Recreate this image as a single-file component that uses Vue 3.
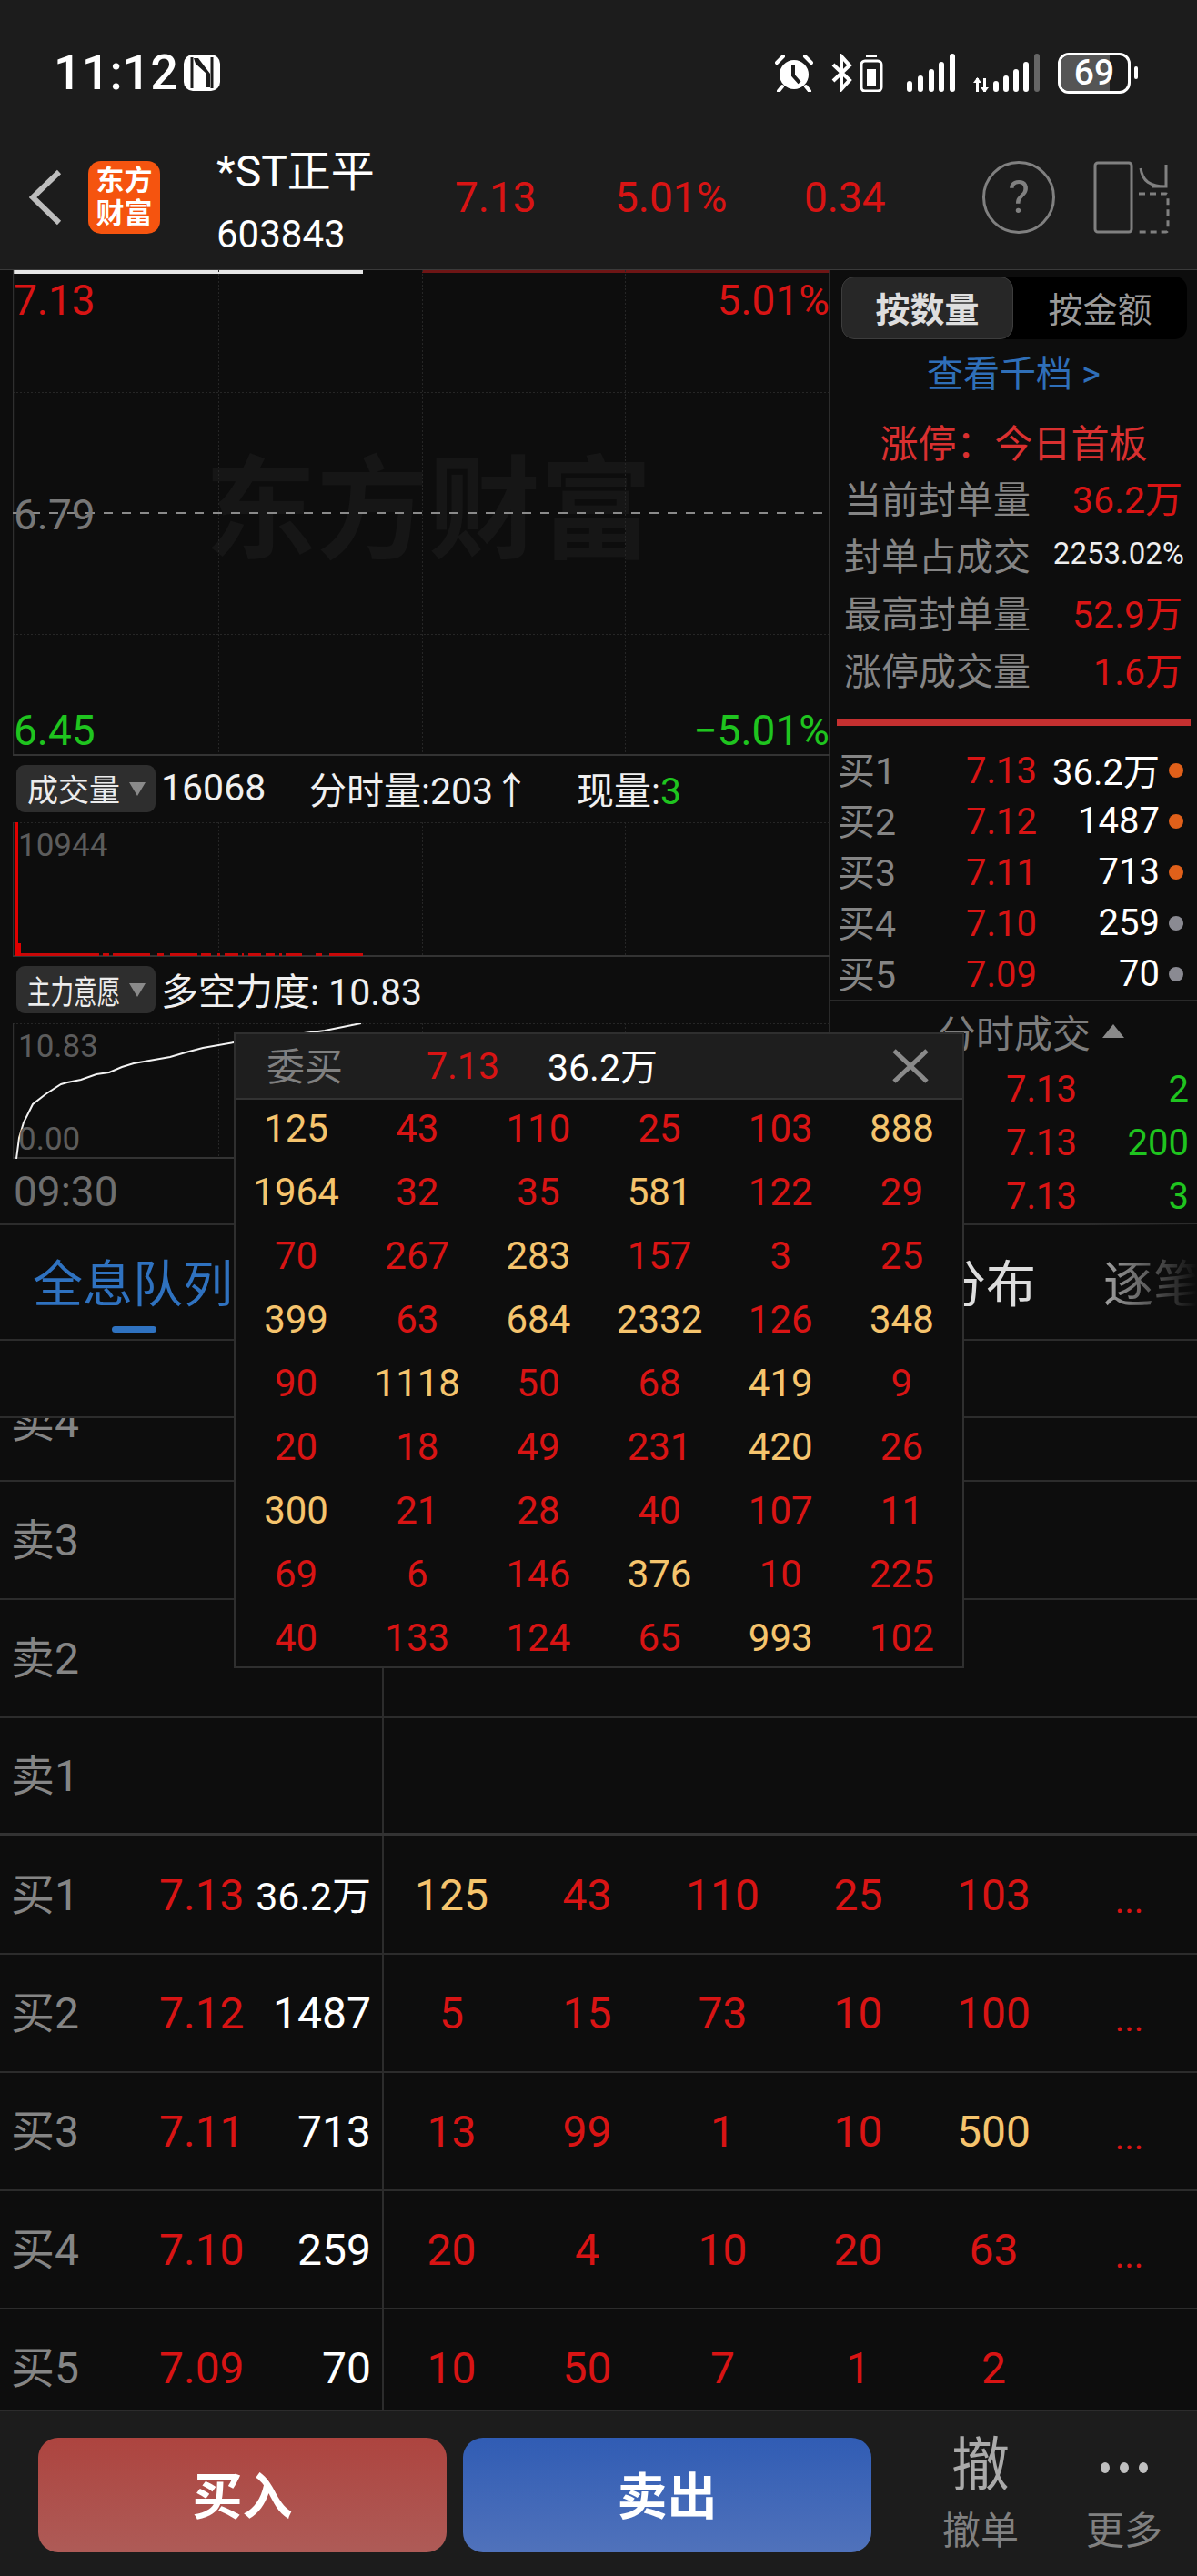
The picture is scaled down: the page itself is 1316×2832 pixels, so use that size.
<script setup>
const limitRows = [
  { label: '当前封单量', value: '36.2万', cls: 'red' },
  { label: '封单占成交', value: '2253.02%', cls: 'small' },
  { label: '最高封单量', value: '52.9万', cls: 'red' },
  { label: '涨停成交量', value: '1.6万', cls: 'red' },
];

const bidRows = [
  { label: '买1', price: '7.13', vol: '36.2万', dot: 'orange' },
  { label: '买2', price: '7.12', vol: '1487', dot: 'orange' },
  { label: '买3', price: '7.11', vol: '713', dot: 'orange' },
  { label: '买4', price: '7.10', vol: '259', dot: 'grey' },
  { label: '买5', price: '7.09', vol: '70', dot: 'grey' },
];

const ticks = [
  { price: '7.13', vol: 2 },
  { price: '7.13', vol: 200 },
  { price: '7.13', vol: 3 },
];

// tiny volume bars along the bottom of the sub chart [from, to]
const volBars = [
  [23, 109], [113, 120], [124, 165], [173, 180], [187, 217], [221, 232], [239, 242], [247, 262],
  [266, 268], [273, 287], [292, 302], [307, 310], [314, 332], [347, 354], [362, 399],
];

const queuePopup = [
  125, 43, 110, 25, 103, 888,
  1964, 32, 35, 581, 122, 29,
  70, 267, 283, 157, 3, 25,
  399, 63, 684, 2332, 126, 348,
  90, 1118, 50, 68, 419, 9,
  20, 18, 49, 231, 420, 26,
  300, 21, 28, 40, 107, 11,
  69, 6, 146, 376, 10, 225,
  40, 133, 124, 65, 993, 102,
];

const bookRows = [
  { label: '卖4' },
  { label: '卖3' },
  { label: '卖2' },
  { label: '卖1', thick: true },
  { label: '买1', price: '7.13', vol: '36.2万', queue: [125, 43, 110, 25, 103], more: true },
  { label: '买2', price: '7.12', vol: '1487', queue: [5, 15, 73, 10, 100], more: true },
  { label: '买3', price: '7.11', vol: '713', queue: [13, 99, 1, 10, 500], more: true },
  { label: '买4', price: '7.10', vol: '259', queue: [20, 4, 10, 20, 63], more: true },
  { label: '买5', price: '7.09', vol: '70', queue: [10, 50, 7, 1, 2], more: false },
];

function isBig(n) {
  return n >= 280 || n === 125;
}
</script>

<template>
  <div class="page">
    <header class="top">
      <div class="status">
        <span class="time">11:12</span>
        <svg class="nfc" width="40" height="40" viewBox="0 0 40 40">
          <rect width="40" height="40" rx="10" fill="#fff" />
          <path d="M9 3v34M31 3v34" stroke="#1c1c1c" stroke-width="3" fill="none" />
          <path d="M11 4h5l13 17v15h-4L25 21 13 10z" fill="#1c1c1c" />
          <path d="M13 19l12 13v-7L13 12z" fill="#fff" />
        </svg>
        <div class="status-right">
          <svg width="42" height="42" viewBox="0 0 42 42">
            <circle cx="21" cy="23" r="16" fill="#fff" />
            <path d="M20 12v12l7 8" stroke="#1c1c1c" stroke-width="4" fill="none" />
            <path d="M2 10L9 3M40 10L33 3M8 36l-4 5M34 36l4 5" stroke="#fff" stroke-width="4" stroke-linecap="round" />
          </svg>
          <svg class="ic-bt" width="58" height="42" viewBox="0 0 58 42">
            <path d="M3 12l18 17-9 10V3l9 10L3 30" stroke="#fff" stroke-width="4" fill="none" />
            <rect x="34" y="8" width="22" height="33" rx="4" stroke="#fff" stroke-width="3" fill="none" />
            <rect x="39" y="1" width="12" height="3" fill="#fff" />
            <rect x="40" y="17" width="10" height="18" fill="#fff" />
          </svg>
          <svg class="ic-sig1" width="53" height="42" viewBox="0 0 53 42">
            <g fill="#fff">
              <rect x="0" y="30" width="6" height="12" rx="3" />
              <rect x="12" y="24" width="6" height="18" rx="3" />
              <rect x="24" y="17" width="6" height="25" rx="3" />
              <rect x="35" y="9" width="6" height="33" rx="3" />
              <rect x="47" y="0" width="6" height="42" rx="3" />
            </g>
          </svg>
          <svg class="ic-sig2" width="73" height="42" viewBox="0 0 73 42">
            <g fill="#fff">
              <rect x="3" y="27" width="3" height="15" />
              <path d="M0 32l4.500-6 4.500 6z" />
              <rect x="11" y="27" width="3" height="15" />
              <path d="M8 37l4.500 6 4.500-6z" />
              <rect x="22" y="30" width="6" height="12" rx="3" />
              <rect x="33" y="24" width="6" height="18" rx="3" />
              <rect x="44" y="17" width="6" height="25" rx="3" />
              <rect x="55" y="9" width="6" height="33" rx="3" />
            </g>
            <rect x="67" y="0" width="6" height="42" rx="3" fill="#666" />
          </svg>
          <div class="battery"><span class="battery-fill"></span><b>69</b></div>
          <span class="battery-tip"></span>
        </div>
      </div>
      <nav class="nav">
        <svg class="back" width="36" height="62" viewBox="0 0 36 62">
          <path d="M33 3L4 31l29 28" stroke="#bdbdbd" stroke-width="6" fill="none" />
        </svg>
        <div class="logo">东方<br />财富</div>
        <div class="stock">
          <div class="stock-name">*ST正平</div>
          <div class="stock-code">603843</div>
        </div>
        <span class="nav-val w1">7.13</span>
        <span class="nav-val w2">5.01%</span>
        <span class="nav-val w3">0.34</span>
        <div class="help">?</div>
        <svg class="split" width="84" height="80" viewBox="0 0 84 80" fill="none" stroke="#808080" stroke-width="3">
          <rect x="2" y="2" width="40" height="76" rx="3" />
          <path d="M50 36h30a2 2 0 0 1 2 2v38a2 2 0 0 1-2 2H50" stroke-dasharray="7 5" />
          <path d="M52 8c2 14 10 20 28 20M80 4v24H64" />
        </svg>
      </nav>
    </header>

    <section class="main">
      <div class="left">
        <div class="chart chart-price">
          <div class="watermark">东方财富</div>
          <svg class="chart-svg" width="899" height="534" viewBox="0 0 899 534">
            <rect x="1" y="0" width="384" height="4" fill="#e6e6e6" />
            <rect x="450" y="0" width="448" height="3" fill="#6e1515" />
            <g stroke="#262626" stroke-width="1" stroke-dasharray="2 2">
              <path d="M0 134.500h898M0 400.500h898M226.500 0v533M450.500 0v533M673.500 0v533" />
            </g>
            <path d="M0.500 0v533M898 0v533" stroke="#2f2f2f" stroke-width="1.500" />
            <path d="M0 533h898" stroke="#333" stroke-width="2" />
            <path d="M0 267h898" stroke="#8a8a8a" stroke-width="2" stroke-dasharray="10 10" />
          </svg>
          <span class="lbl red l-top">7.13</span>
          <span class="lbl red r-top">5.01%</span>
          <span class="lbl grey l-mid">6.79</span>
          <span class="lbl green l-bot">6.45</span>
          <span class="lbl green r-bot">−5.01%</span>
        </div>

        <div class="sub-head">
          <div class="pill"><span class="pill-text">成交量</span><i class="pill-arrow"></i></div>
          <span class="sh-a">16068</span>
          <span class="sh-b">分时量:203↑</span>
          <span>现量:<span class="green">3</span></span>
        </div>
        <div class="chart chart-sub">
          <svg class="chart-svg" width="899" height="148" viewBox="0 0 899 148">
            <path d="M0 0.500h898M226.500 0v147M450.500 0v147M673.500 0v147" stroke="#262626" stroke-dasharray="2 2" />
            <path d="M0.500 0v148" stroke="#2f2f2f" stroke-width="1.500" />
            <path d="M0 147h898" stroke="#333" stroke-width="2" />
            <rect x="2" y="0" width="4" height="147" fill="#e00000" />
            <rect x="6" y="133" width="3" height="14" fill="#e00000" />
            <rect v-for="(b, i) in volBars" :key="i" :x="b[0] - 14" y="144" :width="b[1] - b[0]" height="3" fill="#c80808" />
          </svg>
          <span class="lbl-sub s-top">10944</span>
        </div>

        <div class="sub-head">
          <div class="pill"><span class="pill-text narrow">主力意愿</span><i class="pill-arrow"></i></div>
          <span class="sh-c">多空力度: 10.83</span>
        </div>
        <div class="chart chart-sub">
          <svg class="chart-svg" width="899" height="149" viewBox="0 0 899 149">
            <path d="M0 0.500h898M226.500 0v148M450.500 0v148M673.500 0v148" stroke="#262626" stroke-dasharray="2 2" />
            <path d="M0.500 0v149" stroke="#2f2f2f" stroke-width="1.500" />
            <path d="M0 148h898" stroke="#333" stroke-width="2" />
            <polyline
              points="4,149 7,126 12,109 22,89 36,78 53,67 60,65 75,62 92,56 106,54 120,48 133,44 150,41 173,37 190,32 209,27 243,21 343,8 383,0"
              fill="none" stroke="#f2f2f2" stroke-width="2" />
          </svg>
          <span class="lbl-sub s-top">10.83</span>
          <span class="lbl-sub s-bot">0.00</span>
        </div>
        <div class="time-row">09:30</div>
      </div>

      <aside class="right">
        <div class="toggle">
          <span class="toggle-on">按数量</span>
          <span class="toggle-off">按金额</span>
        </div>
        <div class="link">查看千档 &gt;</div>
        <div class="limit-title">涨停：今日首板</div>
        <div v-for="r in limitRows" :key="r.label" class="limit-row">
          <span class="limit-label">{{ r.label }}</span>
          <span :class="r.cls === 'red' ? 'limit-red' : 'limit-small'">{{ r.value }}</span>
        </div>
        <div class="red-bar"></div>
        <div class="bids">
          <div v-for="r in bidRows" :key="r.label" class="bid-row">
            <span class="grey bid-label">{{ r.label }}</span>
            <span class="red">{{ r.price }}</span>
            <span class="bid-vol">{{ r.vol }}</span>
            <i class="dot" :class="r.dot"></i>
          </div>
        </div>
        <div class="tick-head">分时成交<i class="tick-arrow"></i></div>
        <div v-for="(t, i) in ticks" :key="i" class="tick-row">
          <span class="red">{{ t.price }}</span>
          <span class="green">{{ t.vol }}</span>
        </div>
      </aside>
    </section>

    <div class="tabs">
      <div class="tab-active">全息队列<i class="tab-bar"></i></div>
      <span class="tab-b">分布</span>
      <span class="tab-c">逐笔</span>
      <i class="tab-fade"></i>
    </div>
    <div class="book-head"></div>
    <div class="book">
      <div v-for="(r, i) in bookRows" :key="r.label" class="book-row" :class="{ thick: r.thick, first: i === 0 }">
        <div class="book-left">
          <span class="book-label">{{ r.label }}</span>
          <span v-if="r.price" class="book-price red">{{ r.price }}</span>
          <span v-if="r.vol" class="book-vol" :class="{ tight: r.vol.endsWith('万') }">{{ r.vol }}</span>
        </div>
        <div class="book-right">
          <span v-for="(q, j) in r.queue" :key="j" :class="isBig(q) ? 'gold' : 'red'">{{ q }}</span>
          <span v-if="r.more" class="red more">...</span>
        </div>
      </div>
    </div>

    <footer class="bottom">
      <button class="btn buy"><span>买入</span></button>
      <button class="btn sell"><span>卖出</span></button>
      <div class="act act-cancel">
        <span class="act-icon">撤</span>
        <span class="act-text">撤单</span>
      </div>
      <div class="act act-more">
        <span class="dots"><i></i><i></i><i></i></span>
        <span class="act-text">更多</span>
      </div>
    </footer>

    <div class="popup">
      <div class="popup-head">
        <span class="p-title">委买</span>
        <span class="p-price red">7.13</span>
        <span class="p-vol">36.2万</span>
        <svg class="p-close" width="40" height="38" viewBox="0 0 40 38">
          <path d="M2 2l36 34M38 2L2 36" stroke="#8a8a8a" stroke-width="5" fill="none" />
        </svg>
      </div>
      <div class="popup-grid">
        <span v-for="(n, i) in queuePopup" :key="i" :class="isBig(n) ? 'gold' : 'red'">{{ n }}</span>
      </div>
    </div>
  </div>
</template>

<style scoped>
.page {
  position: relative;
  width: 1316px;
  height: 2832px;
  overflow: hidden;
  background: #0d0d0d;
  color: #fff;
  font-family: Roboto, "Noto Sans CJK SC", sans-serif;
  font-size: 40px;
  display: flex;
  flex-direction: column;
}
.red { color: #d81414; }
.green { color: #1fc41f; }
.grey { color: #858585; }
.gold { color: #f5c46d; }

.top {
  height: 296px;
  background: #1c1c1c;
  flex: none;
  box-shadow: 0 1px 0 #3a3a3a;
}
.status {
  height: 160px;
  display: flex;
  align-items: center;
  padding-left: 59px;
}
.time {
  font-size: 54px;
  font-weight: 500;
  line-height: 1;
  width: 143px;
  white-space: nowrap;
}
.status-right {
  margin-left: 610px;
  display: flex;
  align-items: center;
}
.ic-bt { margin-left: 19px; }
.ic-sig1 { margin-left: 26px; }
.ic-sig2 { margin-left: 20px; }
.battery {
  position: relative;
  margin-left: 20px;
  width: 80px;
  height: 45px;
  box-sizing: border-box;
  border: 3px solid #fff;
  border-radius: 12px;
  display: flex;
  align-items: center;
  justify-content: center;
  overflow: hidden;
}
.battery-fill {
  position: absolute;
  left: 0;
  top: 0;
  bottom: 0;
  width: 54px;
  background: #555;
}
.battery b {
  position: relative;
  font-size: 39px;
  font-weight: 500;
  line-height: 1;
}
.battery-tip {
  width: 4px;
  height: 14px;
  margin-left: 4px;
  border-radius: 2px;
  background: #fff;
}

.nav {
  height: 136px;
  display: flex;
  align-items: center;
  padding: 0 0 22px 32px;
  box-sizing: border-box;
}
.logo {
  margin-left: 29px;
  width: 79px;
  height: 80px;
  background: #f5540f;
  border-radius: 14px;
  color: #fff;
  font-size: 31px;
  font-weight: 700;
  line-height: 36px;
  text-align: center;
  box-sizing: border-box;
  padding-top: 4px;
}
.stock {
  margin-left: 62px;
  width: 262px;
  align-self: flex-start;
  padding-top: 4px;
}
.stock-name {
  font-size: 48px;
  line-height: 50px;
}
.stock-code {
  font-size: 42px;
  line-height: 50px;
  margin-top: 19px;
}
.nav-val {
  color: #d81414;
  font-size: 46px;
}
.w1 { width: 176px; }
.w2 { width: 208px; }
.w3 { width: 196px; }
.help {
  width: 80px;
  height: 80px;
  box-sizing: border-box;
  border: 3px solid #808080;
  border-radius: 50%;
  color: #808080;
  font-size: 50px;
  display: flex;
  align-items: center;
  justify-content: center;
}
.split { margin-left: 42px; }

.main {
  flex: none;
  height: 1050px;
  margin-top: 1px;
  display: flex;
}
.left {
  width: 913px;
  flex: none;
  border-right: 2px solid #2a2a2a;
  display: flex;
  flex-direction: column;
  border-bottom: 2px solid #2c2c2c;
  box-sizing: border-box;
}
.chart {
  position: relative;
  width: 899px;
  margin-left: 14px;
  flex: none;
}
.chart-svg {
  position: absolute;
  left: 0;
  top: 0;
}
.chart-price { height: 534px; }
.chart-sub { height: 148px; }
.watermark {
  position: absolute;
  left: 211px;
  top: 190px;
  font-size: 123px;
  line-height: 150px;
  font-weight: 700;
  color: #161616;
  white-space: nowrap;
}
.lbl {
  position: absolute;
  font-size: 46px;
  line-height: 50px;
}
.l-top { left: 1px; top: 8px; }
.r-top { right: 1px; top: 8px; }
.l-mid { left: 1px; top: 244px; color: #777; }
.l-bot { left: 1px; top: 481px; }
.r-bot { right: 1px; top: 481px; }
.lbl-sub {
  position: absolute;
  left: 6px;
  font-size: 35px;
  line-height: 40px;
  color: #5c5c5c;
}
.s-top { top: 6px; }
.s-bot { top: 108px; }

.sub-head {
  height: 73px;
  flex: none;
  display: flex;
  align-items: center;
  padding: 0 0 4px 18px;
  box-sizing: border-box;
  font-size: 41px;
  color: #f0f0f0;
}
.pill {
  width: 153px;
  height: 52px;
  flex: none;
  background: #2e2e2e;
  border-radius: 9px;
  display: flex;
  align-items: center;
  margin: 2px 6px 0 0;
  padding-left: 12px;
  box-sizing: border-box;
  position: relative;
}
.pill-text {
  font-size: 34px;
  color: #ececec;
  white-space: nowrap;
}
.pill-text.narrow {
  display: inline-block;
  width: 102px;
  font-size: 36px;
  transform: scaleX(.71);
  transform-origin: left center;
}
.pill-arrow {
  position: absolute;
  left: 124px;
  top: 19px;
  border-left: 9px solid transparent;
  border-right: 9px solid transparent;
  border-top: 15px solid #8a8a8a;
}
.sh-a { width: 163px; }
.sh-b { width: 294px; }
.sh-c { font-size: 41px; }
.time-row {
  flex: 1;
  padding-left: 15px;
  font-size: 46px;
  color: #6e6e6e;
  display: flex;
  align-items: center;
  padding-top: 2px;
}

.right {
  flex: 1;
  min-width: 0;
  display: flex;
  flex-direction: column;
  border-bottom: 2px solid #2c2c2c;
}
.toggle {
  margin: 7px 11px 0 12px;
  height: 69px;
  flex: none;
  background: #000;
  border-radius: 14px;
  display: flex;
  align-items: center;
  font-size: 38px;
}
.toggle-on {
  width: 189px;
  height: 69px;
  box-sizing: border-box;
  background: #272727;
  border: 1.500px solid #3d3d3d;
  border-radius: 14px;
  font-weight: 700;
  color: #dedede;
  display: flex;
  align-items: center;
  justify-content: center;
  padding-bottom: 3px;
}
.toggle-off {
  flex: 1;
  text-align: center;
  color: #9a9a9a;
  padding-bottom: 3px;
}
.link {
  height: 72px;
  flex: none;
  display: flex;
  align-items: center;
  justify-content: center;
  font-size: 40px;
  color: #2f6fb8;
  padding-bottom: 3px;
  box-sizing: border-box;
}
.limit-title {
  height: 66px;
  margin-top: 6px;
  flex: none;
  display: flex;
  align-items: center;
  justify-content: center;
  font-size: 42px;
  color: #d93030;
}
.limit-row {
  height: 63px;
  flex: none;
  display: flex;
  align-items: center;
  justify-content: space-between;
  padding: 0 14px 6px 15px;
  box-sizing: border-box;
  font-size: 41px;
}
.limit-row:first-of-type { margin-top: 2px; }
.limit-label { color: #858585; }
.limit-red {
  color: #d81414;
  font-size: 41px;
  margin-right: 2px;
}
.limit-small {
  color: #eee;
  font-size: 33px;
}
.red-bar {
  margin: 22px 7px 0 7px;
  height: 7px;
  flex: none;
  background: #c53030;
}
.bids {
  margin-top: 16px;
  padding-bottom: 5px;
  border-bottom: 1.500px solid #2a2a2a;
  flex: none;
}
.bid-row {
  height: 56px;
  display: grid;
  grid-template-columns: 141px 80px 133px 36px;
  align-items: center;
  padding-left: 8px;
}
.bid-label {
  font-size: 41px;
  padding-bottom: 6px;
}
.bid-vol {
  text-align: right;
  padding-bottom: 2px;
}
.dot {
  width: 16px;
  height: 16px;
  border-radius: 50%;
  justify-self: center;
}
.dot.orange { background: #e0601a; }
.dot.grey { background: #8a8a92; }
.tick-head {
  height: 68px;
  flex: none;
  display: flex;
  align-items: center;
  padding-left: 118px;
  font-size: 42px;
  color: #7d7d7d;
  box-sizing: border-box;
  padding-bottom: 2px;
}
.tick-arrow {
  margin-left: 13px;
  border-left: 12px solid transparent;
  border-right: 12px solid transparent;
  border-bottom: 15px solid #8a8a8a;
}
.tick-row {
  height: 59px;
  flex: none;
  display: flex;
  align-items: center;
  justify-content: space-between;
  padding: 0 9px 0 193px;
}

.tabs {
  position: relative;
  height: 122px;
  flex: none;
  border-bottom: 2px solid #2c2c2c;
  display: flex;
  align-items: center;
  font-size: 55px;
  padding: 0 0 4px 36px;
  box-sizing: content-box;
  margin-top: -1px;
  margin-bottom: -2px;
}
.tab-active {
  position: relative;
  width: 220px;
  color: #2f72c0;
  white-space: nowrap;
}
.tab-bar {
  position: absolute;
  left: 87px;
  top: 91px;
  width: 49px;
  height: 7px;
  border-radius: 4px;
  background: #2f72c0;
}
.tab-b {
  margin-left: 773px;
  width: 184px;
  color: #ddd;
  flex: none;
}
.tab-c {
  color: #bbb;
  white-space: nowrap;
  flex: none;
}
.tab-fade {
  position: absolute;
  top: 0;
  right: 0;
  bottom: 0;
  width: 120px;
  background: linear-gradient(to right, rgba(13, 13, 13, 0), #0d0d0d);
}
.book-head {
  height: 85px;
  flex: none;
  border-bottom: 2px solid #2c2c2c;
}
.book {
  height: 1092px;
  flex: none;
  overflow: hidden;
  font-size: 48px;
  border-bottom: 2px solid #2c2c2c;
  box-sizing: border-box;
}
.book-row {
  height: 130px;
  box-sizing: border-box;
  border-bottom: 2px solid #2c2c2c;
  display: grid;
  grid-template-columns: 422px 1fr;
  align-items: stretch;
}
.book-row.first { margin-top: -60px; }
.book-row.thick { border-bottom: 4px solid #333; }
.book-left {
  border-right: 2px solid #2c2c2c;
  display: flex;
  align-items: center;
  position: relative;
  padding-left: 12px;
}
.book-label {
  width: 163px;
  color: #858585;
  padding-bottom: 8px;
}
.book-price { width: 94px; }
.book-vol {
  position: absolute;
  right: 12px;
}
.book-vol.tight {
  font-size: 43px;
  padding-bottom: 4px;
}
.book-right {
  display: grid;
  grid-template-columns: repeat(6, 1fr);
  align-items: center;
  justify-items: center;
}
.more {
  font-size: 40px;
  line-height: 1;
  padding-top: 14px;
}

.bottom {
  flex: 1;
  background: #1c1c1c;
  display: flex;
  align-items: flex-start;
  padding: 29px 0 0 42px;
  box-sizing: border-box;
}
.btn {
  width: 449px;
  height: 126px;
  border: none;
  border-radius: 22px;
  color: #fff;
  font-family: inherit;
  font-size: 55px;
  font-weight: 700;
  padding: 0 0 6px;
}
.buy { background: linear-gradient(#ad443f, #ae5b57); }
.sell {
  margin-left: 18px;
  background: linear-gradient(#305cb4, #5072bb);
}
.act {
  display: flex;
  flex-direction: column;
  align-items: center;
  width: 84px;
  flex: none;
}
.act-cancel { margin-left: 78px; }
.act-more { margin-left: 74px; }
.act-icon {
  font-size: 64px;
  line-height: 62px;
  color: #aaa;
  height: 66px;
}
.act-text {
  font-size: 42px;
  line-height: 50px;
  color: #808080;
  white-space: nowrap;
  margin-top: 12px;
}
.dots {
  height: 66px;
  display: flex;
  gap: 11px;
  align-items: center;
}
.dots i {
  width: 10px;
  height: 12px;
  border-radius: 50%;
  background: #c0c0c0;
}

.popup {
  position: absolute;
  left: 257px;
  top: 1135px;
  width: 803px;
  height: 699px;
  box-sizing: border-box;
  background: #0d0d0d;
  border: 2px solid #2f2f2f;
  display: flex;
  flex-direction: column;
}
.popup-head {
  height: 70px;
  flex: none;
  background: #1e1e1e;
  border-bottom: 2px solid #333;
  display: flex;
  align-items: center;
  padding-left: 34px;
  box-sizing: content-box;
}
.p-title {
  width: 176px;
  color: #808080;
  font-size: 42px;
  padding-bottom: 6px;
}
.p-price {
  width: 133px;
  font-size: 41px;
}
.p-vol {
  width: 379px;
  font-size: 41px;
  padding-bottom: 5px;
}
.p-close { flex: none; }
.popup-grid {
  flex: 1;
  display: grid;
  grid-template-columns: repeat(6, 1fr);
  grid-auto-rows: 70px;
  align-items: center;
  justify-items: center;
  margin-top: -4px;
  font-size: 42px;
}
</style>

<style>
html, body {
  margin: 0;
  background: #0d0d0d;
}
i { font-style: normal; display: block; }
</style>
